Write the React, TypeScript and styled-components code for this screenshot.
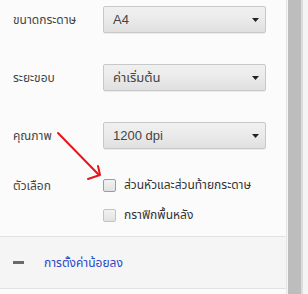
import React from "react";
import styled, { createGlobalStyle } from "styled-components";

const Global = createGlobalStyle`
  html, body { margin: 0; padding: 0; }
  body {
    width: 308px;
    height: 294px;
    overflow: hidden;
    background: #fbfbfb;
    font-family: "Noto Sans Thai", Tahoma, "Noto Sans", "DejaVu Sans", sans-serif;
    font-size: 12px;
    color: #444;
  }
`;

const Page = styled.div`
  position: relative;
  display: flex;
  width: 308px;
  height: 294px;
`;

const Main = styled.div`
  width: 286px;
  display: flex;
  flex-direction: column;
  border-right: 1px solid #e6e6e6;
`;

const Settings = styled.div`
  display: flex;
  flex-direction: column;
  gap: 31px;
  padding: 6px 0 0 13px;
`;

const Row = styled.div<{ $align?: string }>`
  display: grid;
  grid-template-columns: 90px 163px;
  align-items: ${(p) => p.$align || "center"};
`;

const Label = styled.div`
  color: #444;
  line-height: 14px;
`;

const Select = styled.div`
  box-sizing: border-box;
  height: 27px;
  display: flex;
  align-items: center;
  justify-content: space-between;
  padding: 0 6px 0 9px;
  border: 1px solid #c8c8c8;
  border-radius: 2px;
  background: linear-gradient(#f0f0f0, #ececec 40%, #e0e0e0);
  box-shadow: 0 1px 0 rgba(0, 0, 0, 0.06);
  color: #444;
  font-family: "Liberation Sans", "Noto Sans Thai", Tahoma, "DejaVu Sans", sans-serif;
  font-size: 13px;
`;

const Options = styled.div`
  display: grid;
  grid-template-columns: 90px 1fr;
  padding: 30px 0 0 13px;
`;

const OptionList = styled.div`
  display: flex;
  flex-direction: column;
  gap: 17px;
`;

const Option = styled.label`
  display: flex;
  align-items: center;
  gap: 8px;
  line-height: 13px;
  color: #333;
`;

const Box = styled.span<{ $focus?: boolean }>`
  box-sizing: border-box;
  width: 13px;
  height: 13px;
  border-radius: 2px;
  border: 1px solid ${(p) => (p.$focus ? "#7f9fde" : "#c2c2c2")};
  background: linear-gradient(#f2f2f2, #e2e2e2);
  flex: none;
`;

const Divider = styled.div`
  height: 1px;
  background: #e2e2e2;
  margin-top: 14px;
`;

const Footer = styled.div`
  height: 51px;
  background: #f5f5f5;
  display: flex;
  align-items: center;
  gap: 20px;
  padding-left: 13px;
  border-bottom: 1px solid #e2e2e2;
`;

const Minus = styled.span`
  width: 11px;
  height: 3px;
  background: #6a6a6a;
`;

const Link = styled.a`
  color: #2b47c9;
  text-decoration: none;
`;

const Scrollbar = styled.div`
  flex: 1;
  display: flex;
  padding-left: 1px;
  background: #f4f4f4;
`;

const Thumb = styled.div`
  width: 13px;
  background: #bdbdbd;
  border-right: 2px solid #dcdcdc;
`;

const Arrow = styled.svg`
  position: absolute;
  left: 0;
  top: 0;
  pointer-events: none;
`;

const Triangle = () => (
  <svg width="7" height="4" viewBox="0 0 7 4">
    <path d="M0 0H7L3.5 4Z" fill="#222" />
  </svg>
);

export default function App() {
  return (
    <Page>
      <Global />
      <Main>
        <Settings>
          <Row>
            <Label>ขนาดกระดาษ</Label>
            <Select>
              <span>A4</span>
              <Triangle />
            </Select>
          </Row>
          <Row>
            <Label>ระยะขอบ</Label>
            <Select>
              <span>ค่าเริ่มต้น</span>
              <Triangle />
            </Select>
          </Row>
          <Row>
            <Label>คุณภาพ</Label>
            <Select>
              <span>1200 dpi</span>
              <Triangle />
            </Select>
          </Row>
        </Settings>
        <Options>
          <Label>ตัวเลือก</Label>
          <OptionList>
            <Option>
              <Box $focus />
              ส่วนหัวและส่วนท้ายกระดาษ
            </Option>
            <Option>
              <Box />
              กราฟิกพื้นหลัง
            </Option>
          </OptionList>
        </Options>
        <Divider />
        <Footer>
          <Minus />
          <Link>การตั้งค่าน้อยลง</Link>
        </Footer>
      </Main>
      <Scrollbar>
        <Thumb />
      </Scrollbar>
      <Arrow width="308" height="294" viewBox="0 0 308 294">
        <path d="M58 133 L99 175" stroke="#e8161b" strokeWidth="2" fill="none" strokeLinecap="round" />
        <path d="M88 179 L100 175 L98 166" stroke="#e8161b" strokeWidth="2" fill="none" strokeLinecap="round" strokeLinejoin="round" />
      </Arrow>
    </Page>
  );
}
